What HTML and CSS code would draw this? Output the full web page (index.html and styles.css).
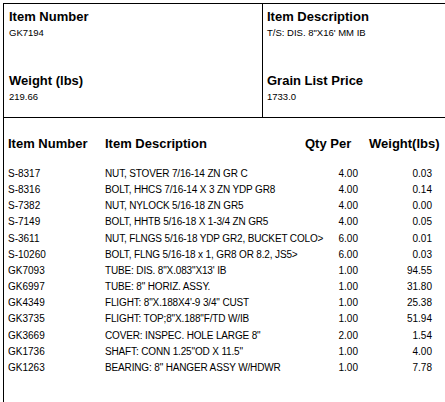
FILE: index.html
```html
<!DOCTYPE html>
<html>
<head>
<meta charset="utf-8">
<link rel="stylesheet" href="styles.css">
</head>
<body>
<div class="sheet">
  <div class="summary">
    <div class="cell cell-left">
      <div class="field">
        <div class="label">Item Number</div>
        <div class="value">GK7194</div>
      </div>
      <div class="field">
        <div class="label">Weight (lbs)</div>
        <div class="value">219.66</div>
      </div>
    </div>
    <div class="cell cell-right">
      <div class="field">
        <div class="label">Item Description</div>
        <div class="value">T/S: DIS. 8"X16' MM IB</div>
      </div>
      <div class="field">
        <div class="label">Grain List Price</div>
        <div class="value">1733.0</div>
      </div>
    </div>
  </div>
  <div class="parts">
    <div class="row head">
      <div class="c-num">Item Number</div>
      <div class="c-desc">Item Description</div>
      <div class="c-qty">Qty Per</div>
      <div class="c-wt">Weight(lbs)</div>
    </div>
    <div class="row"><div class="c-num">S-8317</div><div class="c-desc">NUT, STOVER 7/16-14 ZN GR C</div><div class="c-qty">4.00</div><div class="c-wt">0.03</div></div>
    <div class="row"><div class="c-num">S-8316</div><div class="c-desc">BOLT, HHCS 7/16-14 X 3 ZN YDP GR8</div><div class="c-qty">4.00</div><div class="c-wt">0.14</div></div>
    <div class="row"><div class="c-num">S-7382</div><div class="c-desc">NUT, NYLOCK 5/16-18 ZN GR5</div><div class="c-qty">4.00</div><div class="c-wt">0.00</div></div>
    <div class="row"><div class="c-num">S-7149</div><div class="c-desc">BOLT, HHTB 5/16-18 X 1-3/4 ZN GR5</div><div class="c-qty">4.00</div><div class="c-wt">0.05</div></div>
    <div class="row"><div class="c-num">S-3611</div><div class="c-desc">NUT, FLNGS 5/16-18 YDP GR2, BUCKET COLO&gt;</div><div class="c-qty">6.00</div><div class="c-wt">0.01</div></div>
    <div class="row"><div class="c-num">S-10260</div><div class="c-desc">BOLT, FLNG 5/16-18 x 1, GR8 OR 8.2, JS5&gt;</div><div class="c-qty">6.00</div><div class="c-wt">0.03</div></div>
    <div class="row"><div class="c-num">GK7093</div><div class="c-desc">TUBE: DIS. 8"X.083"X13' IB</div><div class="c-qty">1.00</div><div class="c-wt">94.55</div></div>
    <div class="row"><div class="c-num">GK6997</div><div class="c-desc">TUBE: 8" HORIZ. ASSY.</div><div class="c-qty">1.00</div><div class="c-wt">31.80</div></div>
    <div class="row"><div class="c-num">GK4349</div><div class="c-desc">FLIGHT: 8"X.188X4'-9 3/4" CUST</div><div class="c-qty">1.00</div><div class="c-wt">25.38</div></div>
    <div class="row"><div class="c-num">GK3735</div><div class="c-desc">FLIGHT: TOP;8"X.188"F/TD W/IB</div><div class="c-qty">1.00</div><div class="c-wt">51.94</div></div>
    <div class="row"><div class="c-num">GK3669</div><div class="c-desc">COVER: INSPEC. HOLE LARGE 8"</div><div class="c-qty">2.00</div><div class="c-wt">1.54</div></div>
    <div class="row"><div class="c-num">GK1736</div><div class="c-desc">SHAFT: CONN 1.25"OD X 11.5"</div><div class="c-qty">1.00</div><div class="c-wt">4.00</div></div>
    <div class="row"><div class="c-num">GK1263</div><div class="c-desc">BEARING: 8" HANGER ASSY W/HDWR</div><div class="c-qty">1.00</div><div class="c-wt">7.78</div></div>
  </div>
</div>
</body>
</html>
```
FILE: styles.css
```css
html, body {
  margin: 0;
  padding: 0;
  background: #fff;
}
body {
  font-family: "Liberation Sans", Arial, sans-serif;
  color: #000;
}
.sheet {
  margin: 3px 0 0 3px;
  box-sizing: border-box;
  height: 399px;
  border-left: 1px solid #000;
  border-top: 1px solid #000;
}
.summary {
  display: grid;
  grid-template-columns: 258px 1fr;
  height: 113px;
  border-bottom: 1px solid #000;
}
.cell {
  display: flex;
  flex-direction: column;
  gap: 34px;
  padding: 5px 0 0 5px;
}
.cell-right {
  border-left: 1px solid #000;
  padding-left: 4px;
}
.label {
  font-size: 13px;
  font-weight: bold;
  line-height: 15px;
}
.value {
  font-size: 9.5px;
  line-height: 12px;
  margin-top: 3px;
}
.parts {
  padding: 18px 0 0 4px;
}
.row {
  display: grid;
  grid-template-columns: 97px 200px 53px 80px;
  font-size: 10px;
  height: 16.17px;
  line-height: 16.17px;
  white-space: nowrap;
}
.row > div {
  min-width: 0;
}
.c-desc {
  letter-spacing: -0.15px;
}
.head {
  font-size: 13px;
  font-weight: bold;
  height: 15px;
  line-height: 15px;
  margin-bottom: 15px;
}
.head .c-desc {
  letter-spacing: 0;
}
.c-qty, .c-wt {
  text-align: right;
}
.c-wt {
  padding-right: 6px;
}
.head .c-qty, .head .c-wt {
  text-align: left;
}
.head .c-wt {
  padding-left: 11px;
  padding-right: 0;
}
```
